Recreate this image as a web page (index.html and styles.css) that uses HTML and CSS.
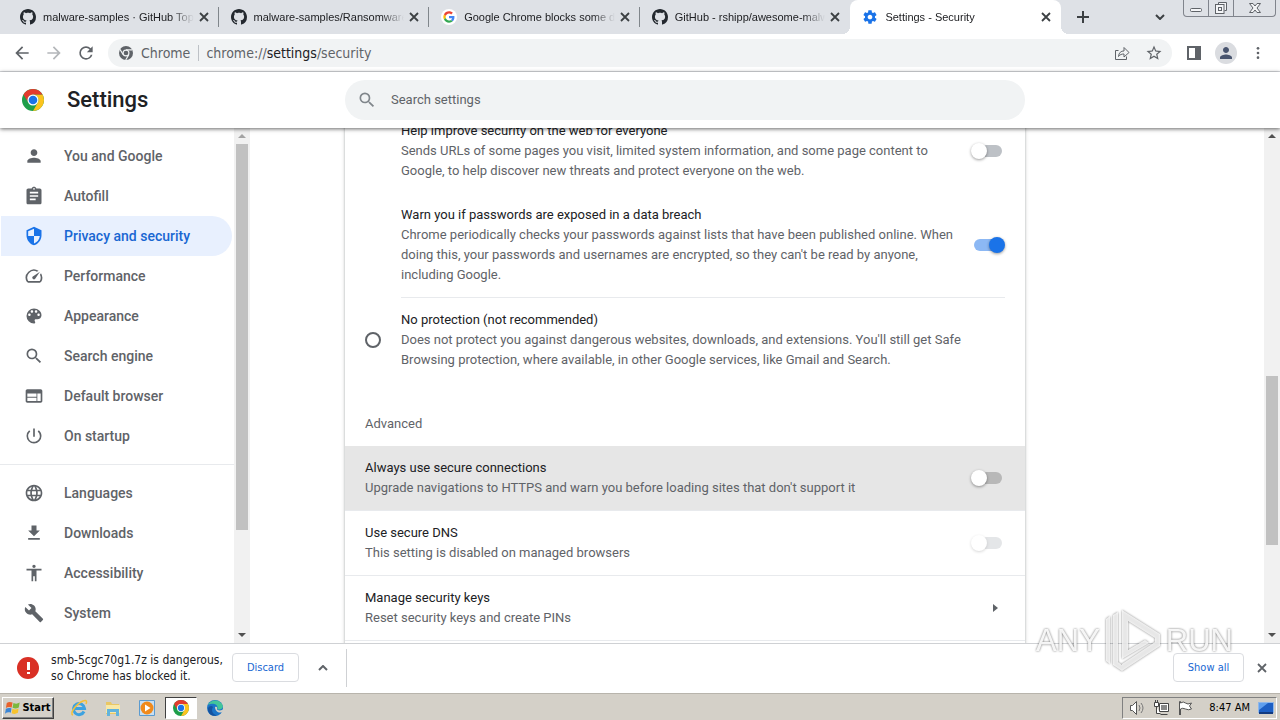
FILE: index.html
```html
<!DOCTYPE html>
<html lang="en">
  <head>
    <meta charset="UTF-8" />
    <meta name="viewport" content="width=device-width, initial-scale=1.0" />
    <title>Settings - Security</title>
    <link rel="stylesheet" href="styles.css">
  </head>
  <body>
    <svg class="sprite" aria-hidden="true">
      <symbol id="github" viewBox="0 0 16 16">
        <path d="M8 0C3.58 0 0 3.58 0 8c0 3.54 2.29 6.53 5.47 7.59.4.07.55-.17.55-.38 0-.19-.01-.82-.01-1.49-2.01.37-2.53-.49-2.69-.94-.09-.23-.48-.94-.82-1.13-.28-.15-.68-.52-.01-.53.63-.01 1.08.58 1.23.82.72 1.21 1.87.87 2.33.66.07-.52.28-.87.51-1.07-1.78-.2-3.64-.89-3.64-3.95 0-.87.31-1.59.82-2.15-.08-.2-.36-1.02.08-2.12 0 0 .67-.21 2.2.82.64-.18 1.32-.27 2-.27s1.36.09 2 .27c1.53-1.04 2.2-.82 2.2-.82.44 1.1.16 1.92.08 2.12.51.56.82 1.27.82 2.15 0 3.07-1.87 3.75-3.65 3.95.29.25.54.73.54 1.48 0 1.07-.01 1.93-.01 2.2 0 .21.15.46.55.38A8.01 8.01 0 0 0 16 8c0-4.42-3.58-8-8-8z"/>
      </symbol>
      <symbol id="close" viewBox="0 0 10 10">
        <path d="M1 1l8 8M9 1L1 9" fill="none" stroke="currentColor" stroke-width="1.8"/>
      </symbol>
      <symbol id="chrome" viewBox="0 0 24 24">
        <circle cx="12" cy="12" r="12" fill="#1e9e4a"/>
        <path fill="#fcc31e" d="M22.39 6A12 12 0 0 1 12 24L17.2 15A6 6 0 0 0 12 6Z"/>
        <path fill="#e33b2e" d="M1.6 6A12 12 0 0 1 22.39 6H12A6 6 0 0 0 6.8 15Z"/>
        <circle cx="12" cy="12" r="6" fill="#fff"/>
        <circle cx="12" cy="12" r="4.7" fill="#1a73e8"/>
      </symbol>
      <symbol id="search" viewBox="0 0 24 24">
        <path d="M15.5 14h-.79l-.28-.27A6.471 6.471 0 0 0 16 9.5 6.5 6.5 0 1 0 9.5 16c1.61 0 3.09-.59 4.23-1.57l.27.28v.79l5 4.99L20.49 19l-4.99-5zm-6 0C7.01 14 5 11.99 5 9.5S7.01 5 9.5 5 14 7.01 14 9.5 11.99 14 9.5 14z"/>
      </symbol>
      <symbol id="person" viewBox="0 0 24 24">
        <path d="M12 12c2.21 0 4-1.79 4-4s-1.79-4-4-4-4 1.79-4 4 1.79 4 4 4zm0 2c-2.67 0-8 1.34-8 4v2h16v-2c0-2.66-5.33-4-8-4z"/>
      </symbol>
    </svg>

    <div class="tabstrip">
      <div class="tabs">
        <div class="tab">
          <svg class="favicon github"><use href="#github"/></svg>
          <span class="tab-title">malware-samples · GitHub Topi</span>
          <button class="tab-close" aria-label="Close tab"><svg><use href="#close"/></svg></button>
        </div>
        <div class="tab">
          <svg class="favicon github"><use href="#github"/></svg>
          <span class="tab-title">malware-samples/Ransomware</span>
          <button class="tab-close" aria-label="Close tab"><svg><use href="#close"/></svg></button>
        </div>
        <div class="tab">
          <svg class="favicon" viewBox="0 0 48 48">
            <circle cx="24" cy="24" r="24" fill="#fff"/>
            <g transform="translate(7 7) scale(.71)">
              <path fill="#EA4335" d="M24 9.5c3.54 0 6.71 1.22 9.21 3.6l6.85-6.85C35.9 2.38 30.47 0 24 0 14.62 0 6.51 5.38 2.56 13.22l7.98 6.19C12.43 13.72 17.74 9.5 24 9.5z"/>
              <path fill="#4285F4" d="M46.98 24.55c0-1.57-.15-3.09-.38-4.55H24v9.02h12.94c-.58 2.96-2.26 5.48-4.78 7.18l7.73 6c4.51-4.18 7.09-10.36 7.09-17.65z"/>
              <path fill="#FBBC05" d="M10.53 28.59c-.48-1.45-.76-2.99-.76-4.59s.27-3.14.76-4.59l-7.98-6.19C.92 16.46 0 20.12 0 24c0 3.88.92 7.54 2.56 10.78l7.97-6.19z"/>
              <path fill="#34A853" d="M24 48c6.48 0 11.93-2.13 15.89-5.81l-7.73-6c-2.15 1.45-4.92 2.3-8.16 2.3-6.26 0-11.57-4.22-13.47-9.91l-7.98 6.19C6.51 42.62 14.62 48 24 48z"/>
            </g>
          </svg>
          <span class="tab-title">Google Chrome blocks some do</span>
          <button class="tab-close" aria-label="Close tab"><svg><use href="#close"/></svg></button>
        </div>
        <div class="tab">
          <svg class="favicon github"><use href="#github"/></svg>
          <span class="tab-title">GitHub - rshipp/awesome-malw</span>
          <button class="tab-close" aria-label="Close tab"><svg><use href="#close"/></svg></button>
        </div>
        <div class="tab active">
          <svg class="favicon gear" viewBox="0 0 24 24"><path d="M19.43 12.98c.04-.32.07-.64.07-.98s-.03-.66-.07-.98l2.11-1.65c.19-.15.24-.42.12-.64l-2-3.46c-.12-.22-.39-.3-.61-.22l-2.49 1c-.52-.4-1.08-.73-1.69-.98l-.38-2.65A.488.488 0 0 0 14 2h-4c-.25 0-.46.18-.49.42l-.38 2.65c-.61.25-1.17.59-1.69.98l-2.49-1c-.23-.09-.49 0-.61.22l-2 3.46c-.13.22-.07.49.12.64l2.11 1.65c-.04.32-.07.65-.07.98s.03.66.07.98l-2.11 1.65c-.19.15-.24.42-.12.64l2 3.46c.12.22.39.3.61.22l2.49-1c.52.4 1.08.73 1.69.98l.38 2.65c.03.24.24.42.49.42h4c.25 0 .46-.18.49-.42l.38-2.65c.61-.25 1.17-.59 1.69-.98l2.49 1c.23.09.49 0 .61-.22l2-3.46c.12-.22.07-.49-.12-.64l-2.11-1.65zM12 15.5c-1.93 0-3.5-1.57-3.5-3.5s1.57-3.5 3.5-3.5 3.5 1.57 3.5 3.5-1.57 3.5-3.5 3.5z"/></svg>
          <span class="tab-title">Settings - Security</span>
          <button class="tab-close" aria-label="Close tab"><svg><use href="#close"/></svg></button>
        </div>
      </div>
      <button class="new-tab" aria-label="New tab"><svg viewBox="0 0 12 12"><path d="M6 0v12M0 6h12"/></svg></button>
      <button class="tab-search" aria-label="Search tabs"><svg viewBox="0 0 10 6"><path d="M1 1l4 4 4-4"/></svg></button>
      <div class="window-buttons">
        <button aria-label="Minimize"><svg viewBox="0 0 16 14"><rect x="2.5" y="7.5" width="11" height="3" rx="1"/></svg></button>
        <button aria-label="Restore"><svg viewBox="0 0 16 14"><path d="M5.5 3.5v-2h8v8h-2"/><rect x="2.5" y="3.5" width="8.5" height="9"/><rect x="5.5" y="6.5" width="3" height="3"/></svg></button>
        <button class="wide" aria-label="Close"><svg viewBox="0 0 16 14"><path d="M2.5 2.5H6L8 5l2-2.5h3.5L10 7l3.5 4.5H10L8 9l-2 2.5H2.5L6 7z"/></svg></button>
      </div>
    </div>

    <div class="toolbar">
      <button class="nav-button" aria-label="Back"><svg viewBox="0 0 24 24"><path d="M20 11H7.83l5.59-5.59L12 4l-8 8 8 8 1.41-1.41L7.83 13H20v-2z"/></svg></button>
      <button class="nav-button" aria-label="Forward" disabled><svg viewBox="0 0 24 24"><path d="M12 4l-1.41 1.41L16.17 11H4v2h12.17l-5.58 5.59L12 20l8-8z"/></svg></button>
      <button class="nav-button" aria-label="Reload"><svg viewBox="0 0 24 24"><path d="M17.65 6.35A7.958 7.958 0 0 0 12 4a8 8 0 1 0 7.73 10h-2.08A5.99 5.99 0 0 1 12 18c-3.31 0-6-2.69-6-6s2.69-6 6-6c1.66 0 3.14.69 4.22 1.78L13 11h7V4l-2.35 2.35z"/></svg></button>
      <div class="omnibox">
        <svg class="site-icon" viewBox="0 0 24 24">
          <circle cx="12" cy="12" r="12"/>
          <path class="gap" d="M12 6.5H22.5M16.8 14.8L11.5 24M7.2 14.8L1.5 5.5"/>
          <circle class="gap" cx="12" cy="12" r="5"/>
        </svg>
        <span class="site-name">Chrome</span>
        <span class="url">chrome://<b>settings</b>/security</span>
        <button class="box-button" aria-label="Share"><svg viewBox="0 0 16 16"><path d="M4.5 5.5h-3v9h11v-3M4.5 11.5C5 7.5 7 6 10 6V2.5l5 5-5 4.5V9c-2.5 0-4 .5-5.5 2.5z"/></svg></button>
        <button class="box-button star" aria-label="Bookmark"><svg viewBox="0 0 24 24"><path d="M22 9.24l-7.19-.62L12 2 9.19 8.63 2 9.24l5.46 4.73L5.82 21 12 17.27 18.18 21l-1.63-7.03L22 9.24zM12 15.4l-3.76 2.27 1-4.28-3.32-2.88 4.38-.38L12 6.1l1.71 4.04 4.38.38-3.32 2.88 1 4.28L12 15.4z"/></svg></button>
      </div>
      <button class="nav-button" aria-label="Side panel"><svg class="panel-icon" viewBox="0 0 14 14"><path d="M0 0h14v14H0zM2 2v10h6V2z" fill-rule="evenodd"/></svg></button>
      <button class="nav-button" aria-label="Profile"><span class="avatar"><svg><use href="#person"/></svg></span></button>
      <button class="nav-button" aria-label="Menu"><svg viewBox="0 0 24 24"><circle cx="12" cy="5" r="2"/><circle cx="12" cy="12" r="2"/><circle cx="12" cy="19" r="2"/></svg></button>
    </div>

    <header class="header">
      <div class="brand">
        <svg class="logo"><use href="#chrome"/></svg>
        <h1>Settings</h1>
      </div>
      <label class="search">
        <svg><use href="#search"/></svg>
        <input type="search" placeholder="Search settings" aria-label="Search settings" />
      </label>
    </header>

    <div class="page">
      <nav class="sidebar">
        <div class="menu">
          <a href="#people"><svg><use href="#person"/></svg>You and Google</a>
          <a href="#autofill"><svg viewBox="0 0 24 24"><path d="M19 3h-4.18C14.4 1.84 13.3 1 12 1c-1.3 0-2.4.84-2.82 2H5c-1.1 0-2 .9-2 2v15c0 1.1.9 2 2 2h14c1.1 0 2-.9 2-2V5c0-1.1-.9-2-2-2zm-7-.5c.6 0 1 .4 1 1s-.4 1-1 1-1-.4-1-1 .4-1 1-1zM14 17H7v-2h7v2zm3-4H7v-2h10v2zm0-4H7V7h10v2z"/></svg>Autofill</a>
          <a href="#privacy" class="selected"><svg viewBox="0 0 24 24"><path d="M12 1L3 5v6c0 5.55 3.84 10.74 9 12 5.16-1.26 9-6.45 9-12V5l-9-4zm0 10.99h7c-.53 4.12-3.28 7.79-7 8.94V12H5V6.3l7-3.11v8.8z"/></svg>Privacy and security</a>
          <a href="#performance"><svg viewBox="0 0 24 24"><path d="M20.38 8.57l-1.23 1.85a8 8 0 0 1-.22 7.58H5.07A8 8 0 0 1 15.58 6.85l1.85-1.23A10 10 0 0 0 3.35 19a2 2 0 0 0 1.72 1h13.85a2 2 0 0 0 1.74-1 10 10 0 0 0-.27-10.44zm-9.79 6.84a2 2 0 0 0 2.83 0l5.66-8.49-8.49 5.66a2 2 0 0 0 0 2.83z"/></svg>Performance</a>
          <a href="#appearance"><svg viewBox="0 0 24 24"><path d="M12 3a9 9 0 0 0 0 18c.83 0 1.5-.67 1.5-1.5 0-.39-.15-.74-.39-1.01-.23-.26-.38-.61-.38-.99 0-.83.67-1.5 1.5-1.5H16c2.76 0 5-2.24 5-5 0-4.42-4.03-8-9-8zm-5.5 9c-.83 0-1.5-.67-1.5-1.5S5.67 9 6.5 9 8 9.67 8 10.5 7.33 12 6.5 12zm3-4C8.67 8 8 7.33 8 6.5S8.67 5 9.5 5s1.5.67 1.5 1.5S10.33 8 9.5 8zm5 0c-.83 0-1.5-.67-1.5-1.5S13.67 5 14.5 5s1.5.67 1.5 1.5S15.33 8 14.5 8zm3 4c-.83 0-1.5-.67-1.5-1.5S16.67 9 17.5 9s1.5.67 1.5 1.5-.67 1.5-1.5 1.5z"/></svg>Appearance</a>
          <a href="#search-engine"><svg><use href="#search"/></svg>Search engine</a>
          <a href="#default-browser"><svg viewBox="0 0 24 24"><path d="M20 4H4c-1.1 0-1.99.9-1.99 2L2 18c0 1.1.9 2 2 2h16c1.1 0 2-.9 2-2V6c0-1.1-.9-2-2-2zm-5 14H4v-4h11v4zm0-5H4V9h11v4zm5 5h-4V9h4v9z"/></svg>Default browser</a>
          <a href="#startup"><svg viewBox="0 0 24 24"><path d="M13 3h-2v10h2V3zm4.83 2.17l-1.42 1.42A6.92 6.92 0 0 1 19 12c0 3.87-3.13 7-7 7A6.995 6.995 0 0 1 7.58 6.58L6.17 5.17A8.932 8.932 0 0 0 3 12a9 9 0 0 0 18 0c0-2.74-1.23-5.18-3.17-6.83z"/></svg>On startup</a>
          <hr />
          <a href="#languages"><svg viewBox="0 0 24 24"><path d="M11.99 2C6.47 2 2 6.48 2 12s4.47 10 9.99 10C17.52 22 22 17.52 22 12S17.52 2 11.99 2zm6.93 6h-2.95a15.65 15.65 0 0 0-1.38-3.56A8.03 8.03 0 0 1 18.92 8zM12 4.04c.83 1.2 1.48 2.53 1.91 3.96h-3.82c.43-1.43 1.08-2.76 1.91-3.96zM4.26 14C4.1 13.36 4 12.69 4 12s.1-1.36.26-2h3.38c-.08.66-.14 1.32-.14 2s.06 1.34.14 2H4.26zm.82 2h2.95c.32 1.25.78 2.45 1.38 3.56A7.987 7.987 0 0 1 5.08 16zm2.95-8H5.08a7.987 7.987 0 0 1 4.33-3.56A15.65 15.65 0 0 0 8.03 8zM12 19.96c-.83-1.2-1.48-2.53-1.91-3.96h3.82c-.43 1.43-1.08 2.76-1.91 3.96zM14.34 14H9.66c-.09-.66-.16-1.32-.16-2s.07-1.35.16-2h4.68c.09.65.16 1.32.16 2s-.07 1.34-.16 2zm.25 5.56c.6-1.11 1.06-2.31 1.38-3.56h2.95a8.03 8.03 0 0 1-4.33 3.56zM16.36 14c.08-.66.14-1.32.14-2s-.06-1.34-.14-2h3.38c.16.64.26 1.31.26 2s-.1 1.36-.26 2h-3.38z"/></svg>Languages</a>
          <a href="#downloads"><svg viewBox="0 0 24 24"><path d="M19 9h-4V3H9v6H5l7 7 7-7zM5 18v2h14v-2H5z"/></svg>Downloads</a>
          <a href="#accessibility"><svg viewBox="0 0 24 24"><path d="M12 2c1.1 0 2 .9 2 2s-.9 2-2 2-2-.9-2-2 .9-2 2-2zm9 7h-6v13h-2v-6h-2v6H9V9H3V7h18v2z"/></svg>Accessibility</a>
          <a href="#system"><svg viewBox="0 0 24 24"><path d="M22.7 19l-9.1-9.1c.9-2.3.4-5-1.5-6.9-2-2-5-2.4-7.4-1.3L9 6 6 9 1.6 4.7C.4 7.1.9 10.1 2.9 12.1c1.9 1.9 4.6 2.4 6.9 1.5l9.1 9.1c.4.4 1 .4 1.4 0l2.3-2.3c.5-.4.5-1.1.1-1.4z"/></svg>System</a>
        </div>
        <div class="scrollbar side-scroll">
          <i class="arrow up muted"></i>
          <div class="track"><div class="thumb"></div></div>
          <i class="arrow down"></i>
        </div>
      </nav>

      <main class="content">
        <section class="card">
          <div class="row indented">
            <label for="improve">
              <span class="title">Help improve security on the web for everyone</span>
              <span class="desc">Sends URLs of some pages you visit, limited system information, and some page content to Google, to help discover new threats and protect everyone on the web.</span>
            </label>
            <input type="checkbox" class="toggle" id="improve" />
          </div>
          <div class="row indented">
            <label for="breach">
              <span class="title">Warn you if passwords are exposed in a data breach</span>
              <span class="desc">Chrome periodically checks your passwords against lists that have been published online. When doing this, your passwords and usernames are encrypted, so they can't be read by anyone, including Google.</span>
            </label>
            <input type="checkbox" class="toggle" id="breach" checked />
          </div>
          <hr />
          <div class="row option">
            <input type="radio" name="protection" id="none" />
            <label for="none">
              <span class="title">No protection (not recommended)</span>
              <span class="desc">Does not protect you against dangerous websites, downloads, and extensions. You'll still get Safe Browsing protection, where available, in other Google services, like Gmail and Search.</span>
            </label>
          </div>
          <h2>Advanced</h2>
          <div class="row lined hovered">
            <label for="https">
              <span class="title">Always use secure connections</span>
              <span class="desc">Upgrade navigations to HTTPS and warn you before loading sites that don't support it</span>
            </label>
            <input type="checkbox" class="toggle" id="https" />
          </div>
          <div class="row lined">
            <label for="dns">
              <span class="title">Use secure DNS</span>
              <span class="desc">This setting is disabled on managed browsers</span>
            </label>
            <input type="checkbox" class="toggle" id="dns" disabled />
          </div>
          <a class="row lined" href="#security-keys">
            <span class="text">
              <span class="title">Manage security keys</span>
              <span class="desc">Reset security keys and create PINs</span>
            </span>
            <i class="more"></i>
          </a>
          <div class="row"></div>
        </section>
      </main>
      <div class="scrollbar page-scroll">
        <i class="arrow up"></i>
        <div class="track"><div class="thumb"></div></div>
        <i class="arrow down"></i>
      </div>
    </div>

    <div class="shelf">
      <svg class="danger" viewBox="0 0 22 22"><circle cx="11" cy="11" r="11"/><path d="M10 5h3v8h-3zM10 15h3v2h-3z"/></svg>
      <p>smb-5cgc70g1.7z is dangerous,<br />so Chrome has blocked it.</p>
      <button class="outlined">Discard</button>
      <button class="caret" aria-label="More options"><svg viewBox="0 0 10 6"><path d="M1 5l4-4 4 4"/></svg></button>
      <button class="outlined show-all">Show all</button>
      <button class="shelf-close" aria-label="Close downloads bar"><svg><use href="#close"/></svg></button>
    </div>

    <div class="taskbar">
      <button class="start">
        <svg viewBox="0 0 18 16">
          <path fill="#e8622c" d="M2 3c2-1.5 4-1.5 6.5-.5L7.5 8C5 7 3 7.3 1 8.5z"/>
          <path fill="#7cb83c" d="M9.5 3c2.5 1 4.5 1 7-.5L15.5 8c-2.5 1.3-4.5 1.3-7 .3z"/>
          <path fill="#3b86d6" d="M1 9.5C3 8.3 5 8.2 7.3 9L6.5 14C4 13 2 13.5 0 15z"/>
          <path fill="#f7c32e" d="M8.3 9.5c2.5 1 4.5 1 7-.5L14.5 14c-2.5 1.5-4.5 1.5-7 .5z"/>
        </svg>
        Start
      </button>
      <button class="task" aria-label="Internet Explorer">
        <svg viewBox="0 0 18 18"><path fill="none" stroke="#3da2e0" stroke-width="3" d="M14 12.5A5.5 5.5 0 1 1 14.5 9.5H5"/><path fill="none" stroke="#f3c03a" stroke-width="1.5" d="M3 16C-1 15 6 5 13 2c4-1.5 4 1 3 3"/></svg>
      </button>
      <button class="task" aria-label="Windows Explorer">
        <svg viewBox="0 0 18 18"><path fill="#e9c765" d="M2 3h5l1 2h7v10H2z"/><path fill="#f8e8a6" d="M2 6h14v8H2z"/><path fill="#62b3dc" d="M3 10h12v7h-3v-4H6v4H3z"/></svg>
      </button>
      <button class="task" aria-label="Media Player">
        <svg viewBox="0 0 18 18"><path fill="#c9dff2" stroke="#5b9bd0" d="M1.5 1.5h15v15h-15z"/><circle cx="9" cy="9" r="6.5" fill="#f08a1c"/><path fill="#fff" d="M7 5.5l5.5 3.5L7 12.5z"/></svg>
      </button>
      <button class="task pressed" aria-label="Google Chrome"><svg><use href="#chrome"/></svg></button>
      <button class="task" aria-label="Microsoft Edge">
        <svg viewBox="0 0 18 18"><circle cx="9" cy="9" r="8" fill="#1b74c8"/><path fill="#43c59a" d="M2 6C4 1 12-.5 16 5c1.5 2.5 1 5-2 5.5-2 .3-3-.5-2.5-1.5C12 5 6 3.5 2 6z"/><path fill="#15539f" d="M7 8c-2 3-1 7 4 8.5-5 1.5-9.5-2-9-7C3 6.5 6 6.5 7 8z"/><path fill="#d4d0c8" d="M9 8c2-1 2.5.5 2 2 0 1.5 3 2 6 .5v2c-3 2.5-8 .5-8-4.5z"/></svg>
      </button>
      <div class="tray">
        <svg viewBox="0 0 16 16"><path fill="#fff" stroke="#555" d="M1.5 5.5h2l4-4v13l-4-4h-2z"/><path fill="none" stroke="#777" d="M10 5q2 3 0 6M12 3q4 5 0 10"/></svg>
        <svg viewBox="0 0 16 16"><path fill="#fff" stroke="#444" d="M6.5 3.5h9v8h-9zM7.5 14.5h7M1.5 2.5h4v4h-4zM2.5 0v2M4.5 0v2M3.5 7v6.5h4"/><path fill="#888" d="M8 5h6v5H8z"/></svg>
        <svg viewBox="0 0 16 16"><path fill="#fff" stroke="#555" d="M2.5 15V1.5h1V3q3-2 5 0t6 0l-2 3 2 3q-3 1.5-6 0t-5 0v6"/></svg>
        <time>8:47 AM</time>
        <svg class="desktop" viewBox="0 0 16 16"><path fill="#1d5fc4" stroke="#8fb7ea" d="M.5 2.5h15v10H.5z"/><path fill="#5f9fee" d="M1 3h9L1 10z"/><path fill="#123a80" d="M1 12h14v2H1z"/></svg>
      </div>
    </div>

    <div class="watermark" aria-hidden="true">
      <span>ANY</span>
      <svg viewBox="0 0 58 64">
        <path d="M2 10l4-3v48l-4-3zM9 6l5-3v50l4 3v6l-9-6zM18 1l38 24v12L18 62v-7l33-22v-4L24 12v29l17-10 4 3-27 16z" fill-rule="evenodd"/>
      </svg>
      <span>RUN</span>
    </div>
  </body>
</html>
```

FILE: styles.css
```css
* {
  box-sizing: border-box;
}
body {
  position: relative;
  display: flex;
  flex-direction: column;
  height: 100vh;
  margin: 0;
  overflow: hidden;
  background-color: #fff;
  color: #202124;
  font-family: Roboto, sans-serif;
  font-size: 13px;
  line-height: 20px;
}
button {
  display: flex;
  align-items: center;
  justify-content: center;
  padding: 0;
  border: none;
  background: none;
  color: inherit;
  font: inherit;
}
a {
  color: inherit;
  text-decoration: none;
}
svg {
  flex: none;
}
.sprite {
  display: none;
}

/* tab strip */
.tabstrip {
  display: flex;
  flex: none;
  align-items: center;
  height: 34px;
  padding: 0 4px 0 8px;
  background-color: #dee1e6;
  font-family: "Liberation Sans", Arial, sans-serif;
  font-size: 11px;
}
.tabs {
  display: flex;
  flex: 0 1 1053px;
  height: 34px;
  min-width: 0;
}
.tab {
  display: flex;
  flex: 1 1 0;
  align-items: center;
  min-width: 0;
  padding: 0 7px 0 12px;
  background: linear-gradient(#80868b, #80868b) right center / 1px 20px no-repeat;
}
.tab:nth-last-child(2) {
  background: none;
}
.tab.active {
  position: relative;
  border-radius: 8px 8px 0 0;
  background: #fff;
}
.tab.active::before,
.tab.active::after {
  content: "";
  position: absolute;
  bottom: 0;
  left: -8px;
  width: 8px;
  height: 8px;
  background: radial-gradient(circle at 0 0, transparent 8px, #fff 8px);
}
.tab.active::after {
  left: 100%;
  background: radial-gradient(circle at 100% 0, transparent 8px, #fff 8px);
}
.favicon {
  width: 16px;
  height: 16px;
}
.favicon.github {
  fill: #24292f;
}
.favicon.gear {
  fill: #1a73e8;
}
.tab-title {
  flex: 1;
  min-width: 0;
  margin: 0 2px 0 7px;
  overflow: hidden;
  white-space: nowrap;
  -webkit-mask-image: linear-gradient(to right, #000 85%, transparent);
  mask-image: linear-gradient(to right, #000 85%, transparent);
}
.tab-close {
  width: 16px;
  height: 16px;
  color: #3c4043;
}
.tab-close svg,
.shelf-close svg {
  width: 10px;
  height: 10px;
}
.new-tab {
  width: 44px;
  height: 28px;
}
.new-tab svg {
  width: 12px;
  height: 12px;
}
.new-tab path,
.tab-search path,
.caret path {
  fill: none;
  stroke: #3c4043;
  stroke-width: 2;
}
.caret path {
  stroke: #5f6368;
}
.tab-search {
  width: 28px;
  height: 28px;
  margin-left: auto;
}
.tab-search svg,
.caret svg {
  width: 10px;
  height: 6px;
}
.window-buttons {
  display: flex;
  align-self: flex-start;
  height: 17px;
  margin-left: 9px;
  border: 1px solid #80848c;
  border-top: none;
  border-radius: 0 0 4px 4px;
}
.window-buttons button {
  width: 25px;
  border-right: 1px solid #80848c;
}
.window-buttons button.wide {
  width: 41px;
  border-right: none;
}
.window-buttons svg {
  width: 16px;
  height: 14px;
  fill: #f4f5f7;
  stroke: #5f6368;
}

/* toolbar */
.toolbar {
  display: flex;
  flex: none;
  align-items: center;
  height: 38px;
  padding: 0 6px;
  border-bottom: 1px solid #dadce0;
  font-family: "DejaVu Sans Condensed", "DejaVu Sans", sans-serif;
}
.nav-button {
  width: 32px;
  height: 28px;
}
.nav-button svg {
  width: 20px;
  height: 20px;
  fill: #5f6368;
}
.nav-button:disabled svg {
  fill: #b4b7ba;
}
.nav-button:last-child svg {
  width: 16px;
  height: 16px;
}
.nav-button .panel-icon {
  width: 14px;
  height: 14px;
}
.omnibox {
  display: flex;
  flex: 1;
  align-items: center;
  height: 28px;
  margin: 0 6px;
  padding: 0 2px 0 11px;
  border-radius: 14px;
  background-color: #f1f3f4;
  color: #5f6368;
  font-size: 14px;
}
.site-icon {
  width: 14px;
  height: 14px;
  fill: #5f6368;
}
.site-icon .gap {
  stroke: #f1f3f4;
  stroke-width: 2;
}
.site-name {
  margin: 0 8px;
}
.url {
  margin-right: auto;
  padding-left: 8px;
  background: linear-gradient(#bdc1c6, #bdc1c6) left center / 1px 16px no-repeat;
}
.url b {
  color: #202124;
  font-weight: normal;
}
.box-button {
  width: 32px;
  height: 28px;
}
.box-button svg {
  width: 16px;
  height: 16px;
  fill: none;
  stroke: #5f6368;
}
.box-button.star svg {
  width: 18px;
  height: 18px;
  fill: #5f6368;
  stroke: none;
}
.avatar {
  display: flex;
  align-items: center;
  justify-content: center;
  width: 22px;
  height: 22px;
  border-radius: 50%;
  background-color: #dadce0;
}
.nav-button .avatar svg {
  width: 18px;
  height: 18px;
  fill: #48546e;
}

/* settings header */
.header {
  position: relative;
  z-index: 1;
  display: flex;
  flex: none;
  align-items: center;
  height: 56px;
  background-color: #fff;
  box-shadow: 0 1px 4px rgba(0, 0, 0, 0.6);
}
.brand {
  display: flex;
  flex: 0 0 345px;
  align-items: center;
  gap: 23px;
  padding-left: 22px;
}
.logo {
  width: 22px;
  height: 22px;
}
h1 {
  margin: 0;
  font-size: 22px;
  font-weight: 500;
}
.search {
  display: flex;
  flex: 0 1 680px;
  align-items: center;
  height: 40px;
  padding: 0 12px;
  border-radius: 20px;
  background-color: #f1f3f4;
}
.search svg {
  width: 20px;
  height: 20px;
  fill: #80868b;
}
.search input {
  flex: 1;
  margin-left: 14px;
  padding: 0;
  border: none;
  outline: none;
  background: none;
  color: #202124;
  font: inherit;
}
.search input::placeholder {
  color: #5f6368;
}

/* page */
.page {
  display: flex;
  flex: 1;
  min-height: 0;
}
.sidebar {
  display: flex;
  flex: 0 0 250px;
  overflow: hidden;
}
.menu {
  flex: 1;
  padding-top: 8px;
  color: #5f6368;
  font-size: 14px;
  font-weight: 500;
}
.menu a {
  display: flex;
  align-items: center;
  gap: 20px;
  height: 40px;
  margin: 0 2px 0 1px;
  padding-left: 23px;
  border-radius: 0 20px 20px 0;
}
.menu a.selected {
  background-color: #e8f0fe;
  color: #1967d2;
}
.menu svg {
  width: 20px;
  height: 20px;
  fill: #5f6368;
}
.menu .selected svg {
  fill: #1a73e8;
}
hr {
  height: 1px;
  margin: 8px 0;
  border: none;
  background-color: #e8eaed;
}
.scrollbar {
  display: flex;
  flex: 0 0 16px;
  flex-direction: column;
  background-color: #f1f1f1;
}
.arrow {
  display: flex;
  align-items: center;
  justify-content: center;
  height: 16px;
}
.arrow::before {
  content: "";
  border: 4px solid transparent;
  border-top: none;
  border-bottom-color: #505050;
}
.arrow.down::before {
  border-top: 4px solid #505050;
  border-bottom: none;
}
.arrow.muted::before {
  border-bottom-color: #a3a3a3;
}
.track {
  flex: 1;
}
.thumb {
  margin: 0 2px;
  background-color: #c1c1c1;
}
.side-scroll .thumb {
  height: 80%;
}
.page-scroll .track {
  display: flex;
  flex-direction: column;
}
.page-scroll .thumb {
  height: 35%;
}
.page-scroll .track::before {
  content: "";
  height: 48%;
}
.content {
  flex: 1;
  min-width: 0;
  padding-left: 95px;
  overflow: hidden;
}
/* the list is scrolled part of the way through its first row */
.card {
  max-width: 680px;
  margin-top: -19px;
  background-color: #fff;
  box-shadow: 0 1px 2px rgba(60, 64, 67, 0.3), 0 1px 3px 1px rgba(60, 64, 67, 0.15);
}
.row {
  display: flex;
  align-items: center;
  padding: 12px 20px;
}
.row.indented {
  padding-left: 56px;
}
.row label,
.row .text {
  flex: 1;
  padding-right: 16px;
}
.row.option {
  gap: 20px;
}
.row.lined {
  border-bottom: 1px solid #e8eaed;
}
.row.hovered {
  background-color: #e6e6e6;
}
.title,
.desc {
  display: block;
}
.desc {
  color: #5f6368;
}
.card hr {
  margin: 0 20px 0 56px;
}
h2 {
  margin: 32px 20px 12px;
  color: #5f6368;
  font-size: 13px;
  font-weight: 400;
}
.toggle {
  position: relative;
  flex: none;
  width: 28px;
  height: 12px;
  margin: 0 3px;
  border-radius: 6px;
  background-color: #bdc1c6;
  appearance: none;
}
.toggle::before {
  content: "";
  position: absolute;
  top: -2px;
  left: -3px;
  width: 16px;
  height: 16px;
  border-radius: 50%;
  background-color: #fff;
  box-shadow: 0 1px 3px rgba(0, 0, 0, 0.4);
}
.toggle:checked {
  background-color: #8cb8f4;
}
.toggle:checked::before {
  left: 15px;
  background-color: #1a73e8;
}
.toggle:disabled {
  opacity: 0.4;
}
.hovered .toggle {
  background-color: #b8b8b8;
}
input[type="radio"] {
  flex: none;
  width: 16px;
  height: 16px;
  margin: 0;
  border: 2px solid #5f6368;
  border-radius: 50%;
  appearance: none;
}
.more {
  margin-right: 7px;
  border: 4px solid transparent;
  border-right: none;
  border-left: 5px solid #5f6368;
}

/* downloads shelf */
.shelf {
  display: flex;
  flex: none;
  align-items: center;
  height: 50px;
  padding: 0 13px 2px 17px;
  border-top: 1px solid #cfd1d4;
  background-color: #fff;
  font-family: "DejaVu Sans Condensed", "DejaVu Sans", sans-serif;
  font-size: 12px;
}
.danger {
  width: 22px;
  height: 22px;
  fill: #d93025;
}
.danger path {
  fill: #fff;
}
.shelf p {
  width: 181px;
  margin: 0 0 0 12px;
  line-height: 16px;
  white-space: nowrap;
}
.outlined {
  width: 67px;
  height: 29px;
  border: 1px solid #dadce0;
  border-radius: 4px;
  background-color: #fff;
  color: #1967d2;
  font-size: 11px;
}
.caret {
  width: 48px;
  height: 38px;
  border-right: 1px solid #cfd1d4;
}
.show-all {
  width: 71px;
  margin-left: auto;
}
.shelf-close {
  margin-left: 13px;
  color: #5f6368;
}

/* taskbar */
.taskbar {
  display: flex;
  flex: none;
  align-items: center;
  height: 27px;
  padding: 1px 3px 0 2px;
  border-top: 1px solid #b8b4ac;
  background-color: #d4d0c8;
  color: #000;
  font-family: "DejaVu Sans Condensed", "DejaVu Sans", sans-serif;
  font-size: 11px;
}
.start {
  gap: 1px;
  width: 52px;
  height: 22px;
  margin-right: 9px;
  border: 1px solid;
  border-color: #fff #404040 #404040 #fff;
  box-shadow: inset -1px -1px 0 #808080;
  font-weight: bold;
}
.start svg {
  width: 16px;
  height: 15px;
}
.task {
  width: 32px;
  height: 22px;
  margin-right: 2px;
}
.task svg {
  width: 18px;
  height: 18px;
}
.task.pressed {
  border: 1px solid;
  border-color: #404040 #fff #fff #404040;
  background-color: #fff;
}
.task.pressed svg {
  width: 16px;
  height: 16px;
}
.tray {
  display: flex;
  align-items: center;
  gap: 8px;
  height: 22px;
  margin-left: auto;
  padding: 0 2px 0 6px;
  border: 1px solid;
  border-color: #808080 #fff #fff #808080;
}
.tray svg {
  width: 16px;
  height: 16px;
}
.tray time {
  margin-left: 8px;
}

/* floats over the lower right corner */
.watermark {
  position: absolute;
  right: 47px;
  bottom: 47px;
  display: flex;
  align-items: center;
  gap: 4px;
  color: rgba(255, 255, 255, 0.9);
  font-family: "Liberation Sans Narrow", "Liberation Sans", sans-serif;
  font-size: 31px;
  line-height: 64px;
  pointer-events: none;
  filter: drop-shadow(0 0 1px rgba(0, 0, 0, 0.6));
}
.watermark svg {
  width: 58px;
  height: 64px;
  fill: rgba(255, 255, 255, 0.8);
}
```
